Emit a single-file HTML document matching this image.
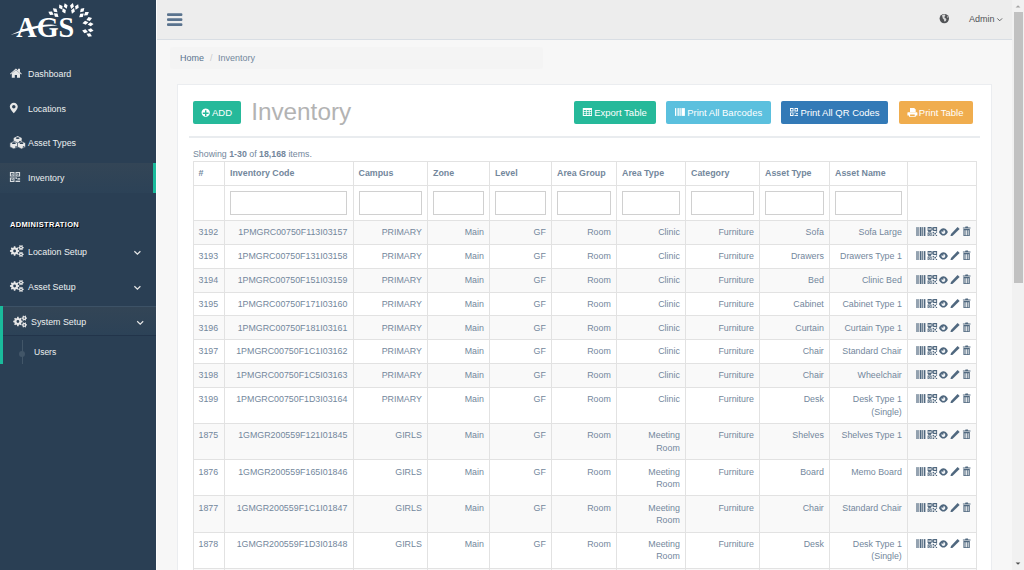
<!DOCTYPE html>
<html><head><meta charset="utf-8">
<style>
*{box-sizing:border-box;}
html,body{margin:0;padding:0;width:1024px;height:570px;overflow:hidden;background:#F7F7F7;font-family:"Liberation Sans",sans-serif;color:#73879C;font-size:9px;}
.abs{position:absolute;}
#side{position:absolute;left:0;top:0;width:156px;height:570px;background:#2A3F54;}
#vline{position:absolute;left:156px;top:0;width:1px;height:570px;background:#fdfdfd;}
#top{position:absolute;left:157px;top:0;width:855px;height:40px;background:#EDEDED;border-bottom:1px solid #D9DEE4;}
#sb{position:absolute;left:1012px;top:0;width:12px;height:570px;background:#F1F1F1;}
#thumb{position:absolute;left:1014px;top:12px;width:9px;height:271px;background:#C1C1C1;}
.menu{position:absolute;left:28px;color:#ECF0F1;font-size:8.85px;white-space:nowrap;margin-top:0.6px;}
.ico{position:absolute;}
#crumb{position:absolute;left:170px;top:47px;width:373px;height:22px;background:#F4F4F4;border-radius:3px;}
#panel{position:absolute;left:177px;top:84px;width:815px;height:500px;background:#fff;border:1px solid #EBEDF0;}
.btn{position:absolute;top:101px;height:23px;border-radius:2px;color:#fff;font-size:9.5px;line-height:23px;white-space:nowrap;}
#hr{position:absolute;left:189px;top:135.5px;width:791px;height:2px;background:#E9ECEF;}
table{position:absolute;left:192.5px;top:161px;border-collapse:collapse;table-layout:fixed;width:783px;}
td,th{border:1px solid #E2E2E2;padding:0 5.2px 0 5px;line-height:12px;font-size:8.85px;color:#73879C;text-align:right;vertical-align:top;}
th{text-align:left;font-weight:bold;height:24px;vertical-align:middle;padding-bottom:1.5px;}
tr.f td{height:35px;padding:5px 5.2px 5px 5px;}
tr.f input{display:block;width:100%;height:24px;border:1px solid #D0D0D0;margin:0;padding:0;background:#fff;}
tbody tr.d td{padding-top:5.25px;padding-bottom:5.25px;line-height:12.35px;}
tbody tr.d:nth-child(odd) td{background:#F9F9F9;}
td.a{padding:6px 0 0 8px;line-height:0;}
td.a svg{display:block;}
td.n{text-align:left;}
</style></head>
<body>
<svg width="0" height="0" style="position:absolute">
<defs>
<g id="barcode"><rect x="0" y="0" width="1.2" height="9"/><rect x="2" y="0" width="0.8" height="9"/><rect x="3.5" y="0" width="1.6" height="9"/><rect x="5.8" y="0" width="0.8" height="9"/><rect x="7.3" y="0" width="1.7" height="9"/></g>
<g id="qr"><path d="M0 0h4v4h-4zM1 1v2h2v-2zM5.5 0h4v4h-4zM6.5 1v2h2v-2zM0 5.5h4v4h-4zM1 6.5v2h2v-2z" fill-rule="evenodd"/><rect x="1.5" y="1.5" width="1" height="1"/><rect x="7" y="1.5" width="1" height="1"/><rect x="1.5" y="7" width="1" height="1"/><rect x="5" y="5" width="1.5" height="1.5"/><rect x="6.8" y="6" width="1.6" height="1.5"/><rect x="8.2" y="8" width="1.3" height="1.5"/><rect x="5" y="7.6" width="1.6" height="1.9"/><rect x="4.2" y="0.5" width="1" height="3"/><rect x="0.5" y="4.2" width="3" height="1"/><rect x="8.3" y="4.5" width="1.2" height="1.3"/></g>
<g id="eye"><path d="M0 3.7C1.4 1.1 2.9 0 4.5 0S7.6 1.1 9 3.7C7.6 6.3 6.1 7.4 4.5 7.4S1.4 6.3 0 3.7z"/><path d="M4.5 1.7C5.6 1.7 6.4 2.6 6.4 3.7S5.6 5.7 4.5 5.7S2.6 4.8 2.6 3.7c0-0.4 0.1-0.7 0.3-1C3 3.2 3.4 3.5 3.9 3.5C4.4 3.5 4.7 3.1 4.7 2.6C4.7 2.3 4.5 1.9 4.2 1.8z" fill="#EEF1F4"/></g>
<g id="pencil"><path d="M7.3 0.2L9.3 2.2L2.4 9.1L0 9.8L0.7 7.4z"/></g>
<g id="trash"><path d="M2.9 0h2.4l0.4 0.9h2.2v1.2h-7.6v-1.2h2.2z"/><path d="M0.8 2.6h6.4v6.4c0 0.5-0.3 0.8-0.8 0.8h-4.8c-0.5 0-0.8-0.3-0.8-0.8zM2 3.8v5h0.85v-5zM3.58 3.8v5h0.85v-5zM5.15 3.8v5h0.85v-5z" fill-rule="evenodd"/></g>
<g id="acts" fill="#50687F"><use href="#barcode" x="0.4" y="1.1"/><use href="#qr" x="11.6" y="0.9"/><use href="#eye" transform="translate(22.9,2.2)"/><use href="#pencil" x="34.3" y="0.7"/><use href="#trash" x="46.6" y="0.5"/></g>
</defs></svg>
<div id="side"></div>
<div id="vline"></div>
<div id="top"></div>
<div id="sb"></div>
<div id="thumb"></div>
<svg class="abs" style="left:1012px;top:0" width="12" height="570"><path d="M3.6 7.6L6 5.2L8.4 7.6z" fill="#A3A3A3"/><path d="M3.6 562.4L6 564.8L8.4 562.4z" fill="#505050"/></svg>


<!-- LOGO -->
<svg class="abs" style="left:0;top:0" width="156" height="45" viewBox="0 0 156 45">
<text x="16.3" y="37.2" font-family="Liberation Serif" font-size="28.5" font-weight="bold" fill="#fff" textLength="58" lengthAdjust="spacingAndGlyphs">AGS</text>
<path d="M10.5 35C20 30 30 26.8 40 25.2C47 24.2 53 24.3 57.5 25.8C52 25.8 46 26.3 40 27.6C30 29.8 20 32.6 10.5 35z" fill="#fff"/>
<defs><path id="lf" d="M0 -3L2 0L0 3L-2 0z"/></defs>
<g fill="#fff">
<use href="#lf" transform="translate(51,13.3) rotate(-60)"/>
<use href="#lf" transform="translate(55.2,10.2) rotate(-50)"/>
<use href="#lf" transform="translate(56.2,15.1) rotate(-50)"/>
<use href="#lf" transform="translate(60.8,7) rotate(-30)"/>
<use href="#lf" transform="translate(65.7,6) rotate(-20)"/>
<use href="#lf" transform="translate(64,10.9) rotate(-25)"/>
<use href="#lf" transform="translate(72,6) rotate(15)"/>
<use href="#lf" transform="translate(76.9,7) rotate(25)"/>
<use href="#lf" transform="translate(73,10.9) rotate(20)"/>
<use href="#lf" transform="translate(82.2,10.2) rotate(45)"/>
<use href="#lf" transform="translate(86.4,13.7) rotate(55)"/>
<use href="#lf" transform="translate(81.5,15.4) rotate(50)"/>
<use href="#lf" transform="translate(89.2,19) rotate(70)"/>
<use href="#lf" transform="translate(90.6,24.2) rotate(85)"/>
<use href="#lf" transform="translate(85.4,22.8) rotate(80)"/>
<use href="#lf" transform="translate(90.6,30.2) rotate(100)"/>
<use href="#lf" transform="translate(89.2,35) rotate(115)"/>
<use href="#lf" transform="translate(85,31.2) rotate(105)"/>
</g>
</svg>
<!-- sidebar menu -->
<div class="menu" style="top:68.9px;">Dashboard</div>
<div class="menu" style="top:103.4px;">Locations</div>
<div class="menu" style="top:137.9px;">Asset Types</div>
<div class="abs" style="left:0;top:163px;width:153px;height:30px;background:linear-gradient(#334556,#2C4257);"></div>
<div class="abs" style="left:153px;top:163px;width:3px;height:30px;background:#1ABB9C;"></div>
<div class="menu" style="top:172.9px;">Inventory</div>
<div class="menu" style="left:10px;top:219.8px;font-weight:bold;font-size:7.5px;letter-spacing:0.33px;color:#fff;text-shadow:1px 1px #000;">ADMINISTRATION</div>
<div class="menu" style="top:246.9px;">Location Setup</div>
<div class="menu" style="top:281.1px;">Asset Setup</div>
<div class="abs" style="left:0;top:306px;width:3px;height:58px;background:#1ABB9C;"></div>
<div class="abs" style="left:3px;top:306px;width:153px;height:30px;background:linear-gradient(#334556,#2C4257);border-top:1px solid #3d5266;border-bottom:1px solid #22344a;"></div>
<div class="menu" style="left:31px;top:316.3px;">System Setup</div>
<div class="menu" style="left:34px;top:346.4px;font-size:8.5px;">Users</div>
<!-- SIDEBAR ICONS -->
<svg class="abs" style="left:0;top:60px" width="30" height="310" viewBox="0 60 30 310">
<g fill="#E7E7E7">
<!-- home -->
<path d="M10 73.8L15.9 68.4L18 70.3V68.8H20V72.1L21.8 73.8L21.2 74.5L15.9 69.7L10.6 74.5z"/>
<path d="M11.8 73.6L15.9 70L20 73.6V77.8H17V75H14.8V77.8H11.8z"/>
<!-- marker -->
<path d="M13.8 102.7C16 102.7 17.8 104.5 17.8 106.7C17.8 108.8 15.6 111 13.8 113.3C12 111 9.8 108.8 9.8 106.7C9.8 104.5 11.6 102.7 13.8 102.7zM13.8 105C12.9 105 12.1 105.8 12.1 106.7C12.1 107.6 12.9 108.4 13.8 108.4C14.7 108.4 15.5 107.6 15.5 106.7C15.5 105.8 14.7 105 13.8 105z" fill-rule="evenodd"/>
<!-- cubes -->
<path d="M17.7 136.0L21.7 137.95000000000002V141.85L17.7 143.8L13.7 141.85V137.95000000000002z"/>
<path d="M13.9 141.1L17.9 143.05V146.95L13.9 148.9L9.9 146.95V143.05z" stroke="#2A3F54" stroke-width="0.6"/>
<path d="M21.5 141.1L25.5 143.05V146.95L21.5 148.9L17.5 146.95V143.05z" stroke="#2A3F54" stroke-width="0.6"/>
<g fill="#2A3F54"><ellipse cx="17.7" cy="138.1" rx="1.9" ry="0.85"/><path d="M19.0 141.5L20.5 140.8V142.0L19.0 142.70000000000002z"/><ellipse cx="13.9" cy="143.2" rx="1.9" ry="0.85"/><path d="M15.200000000000001 146.6L16.7 145.9V147.1L15.200000000000001 147.8z"/><ellipse cx="21.5" cy="143.2" rx="1.9" ry="0.85"/><path d="M22.8 146.6L24.3 145.9V147.1L22.8 147.8z"/></g>
</g>
<!-- qr inventory -->
<g fill="#D8DCE0">
<path d="M9.9 171.9h4.6v4.6h-4.6zM11 173v2.4h2.4v-2.4zM15.5 171.9h4.6v4.6h-4.6zM16.6 173v2.4h2.4v-2.4zM9.9 177.4h4.6v4.6h-4.6zM11 178.5v2.4h2.4v-2.4z" fill-rule="evenodd"/>
<rect x="11.6" y="173.6" width="1.2" height="1.2"/><rect x="17.2" y="173.6" width="1.2" height="1.2"/><rect x="11.6" y="179.1" width="1.2" height="1.2"/>
<rect x="15.5" y="177.4" width="1.5" height="1.5"/><rect x="17.5" y="178.2" width="2.6" height="1.4"/><rect x="15.5" y="180.6" width="4.6" height="1.4"/><rect x="14.5" y="176.5" width="1" height="1"/>
</g>
<g fill="#E7E7E7">
<!-- cogs -->
<g id="cogs"><path d="M18.09 250.10 L19.24 250.26 L19.24 251.74 L18.09 251.90 L17.70 252.83 L18.40 253.76 L17.36 254.80 L16.43 254.10 L15.50 254.49 L15.34 255.64 L13.86 255.64 L13.70 254.49 L12.77 254.10 L11.84 254.80 L10.80 253.76 L11.50 252.83 L11.11 251.90 L9.96 251.74 L9.96 250.26 L11.11 250.10 L11.50 249.17 L10.80 248.24 L11.84 247.20 L12.77 247.90 L13.70 247.51 L13.86 246.36 L15.34 246.36 L15.50 247.51 L16.43 247.90 L17.36 247.20 L18.40 248.24 L17.70 249.17zM16.00 251.00A1.4 1.4 0 1 0 13.20 251.00A1.4 1.4 0 1 0 16.00 251.00z" fill-rule="evenodd"/><path d="M22.89 246.94 L23.64 247.04 L23.64 248.16 L22.89 248.26 L22.51 248.91 L22.81 249.61 L21.83 250.17 L21.37 249.56 L20.63 249.56 L20.17 250.17 L19.19 249.61 L19.49 248.91 L19.11 248.26 L18.36 248.16 L18.36 247.04 L19.11 246.94 L19.49 246.29 L19.19 245.59 L20.17 245.03 L20.63 245.64 L21.37 245.64 L21.83 245.03 L22.81 245.59 L22.51 246.29zM21.75 247.60A0.75 0.75 0 1 0 20.25 247.60A0.75 0.75 0 1 0 21.75 247.60z" fill-rule="evenodd"/><path d="M22.89 253.74 L23.64 253.84 L23.64 254.96 L22.89 255.06 L22.51 255.71 L22.81 256.41 L21.83 256.97 L21.37 256.36 L20.63 256.36 L20.17 256.97 L19.19 256.41 L19.49 255.71 L19.11 255.06 L18.36 254.96 L18.36 253.84 L19.11 253.74 L19.49 253.09 L19.19 252.39 L20.17 251.83 L20.63 252.44 L21.37 252.44 L21.83 251.83 L22.81 252.39 L22.51 253.09zM21.75 254.40A0.75 0.75 0 1 0 20.25 254.40A0.75 0.75 0 1 0 21.75 254.40z" fill-rule="evenodd"/></g>
<use href="#cogs" transform="translate(0,35)"/>
<use href="#cogs" transform="translate(3.3,70.5)"/>
</g>
<g fill="none" stroke="#E7E7E7" stroke-width="1.3">
<path d="M134.3 251l3.1 3l3.1-3"/>
</g>
</svg>

<svg class="abs" style="left:130px;top:240px" width="20" height="90" viewBox="130 240 20 90"><g fill="none" stroke="#E7E7E7" stroke-width="1.2"><path d="M134.4 251.2l3 2.9l3-2.9"/><path d="M134.4 286.2l3 2.9l3-2.9"/><path d="M137.2 321.2l3 2.9l3-2.9"/></g></svg>
<div class="abs" style="left:21.5px;top:340px;width:1px;height:24px;background:#425668;"></div>
<div class="abs" style="left:19px;top:350.5px;width:6px;height:6px;border-radius:50%;background:#425668;"></div>

<!-- top nav -->
<svg class="abs" style="left:160px;top:5px" width="30" height="30" viewBox="160 5 30 30"><g fill="#5A738E"><rect x="167" y="13.3" width="15.4" height="2.6" rx="1"/><rect x="167" y="18.3" width="15.4" height="2.6" rx="1"/><rect x="167" y="23.3" width="15.4" height="2.6" rx="1"/></g></svg>
<svg class="abs" style="left:935px;top:10px" width="75" height="18" viewBox="935 10 75 18">
<circle cx="944.3" cy="18.6" r="4.7" fill="#515356"/>
<path d="M942 15.2c0.8-0.6 2-0.9 2.8-0.6l0.6 1.2l-0.9 0.9l0.2 1.2l1.3 0.5l0.4 1.3l-0.8 1.6c-0.6 0.3-1.2 0.2-1.4-0.4l-0.3-1.4l-1.1-0.9z M947.1 16l0.8 0.6l0.2 1.5l-0.8-0.5z" fill="#EDEDED" opacity="0.85"/>
<path d="M997.3 18.4l2.4 2.4l2.4-2.4" fill="none" stroke="#515356" stroke-width="0.9"/>
</svg>

<div class="abs" style="left:969px;top:14px;font-size:9px;color:#515356;">Admin</div>

<div id="crumb"></div>
<div class="abs" style="left:180px;top:53px;color:#5A738E;">Home</div>
<div class="abs" style="left:210px;top:53px;color:#ccc;">/</div>
<div class="abs" style="left:218px;top:53px;color:#73879C;">Inventory</div>

<div id="panel"></div>
<div class="btn" style="left:193px;width:48px;background:#26B99A;"></div>
<div class="btn" style="left:574px;width:82px;background:#26B99A;"></div>
<div class="btn" style="left:666px;width:105px;background:#5BC0DE;"></div>
<div class="btn" style="left:781px;width:107px;background:#337AB7;"></div>
<div class="btn" style="left:899px;width:74px;background:#F0AD4E;"></div>
<div class="btn" style="left:212px;">ADD</div>
<div class="btn" style="left:594.2px;">Export Table</div>
<div class="btn" style="left:687.2px;">Print All Barcodes</div>
<div class="btn" style="left:800.4px;">Print All QR Codes</div>
<div class="btn" style="left:918.8px;">Print Table</div>
<div class="abs" style="left:251.2px;top:97.6px;font-size:24.3px;color:#B3B3B3;">Inventory</div>
<svg class="abs" style="left:190px;top:100px" width="790" height="25" viewBox="190 100 790 25">
<g fill="#fff">
<path d="M205.7 108.4a4.15 4.15 0 1 0 0.01 0zM205 110.3h1.4v2.2h2.2v1.4h-2.2v2.2h-1.4v-2.2h-2.2v-1.4h2.2z" fill-rule="evenodd"/>
<path d="M582.8 108.1h9.2v7.8h-9.2zM583.8 109.9v1.4h2.1v-1.4zM586.7 109.9v1.4h2.1v-1.4zM589.6 109.9v1.4h1.6v-1.4zM583.8 112v1.4h2.1v-1.4zM586.7 112v1.4h2.1v-1.4zM589.6 112v1.4h1.6v-1.4zM583.8 114.1v1h2.1v-1zM586.7 114.1v1h2.1v-1zM589.6 114.1v1h1.6v-1z" fill-rule="evenodd"/>
<rect x="675" y="108.1" width="1.1" height="7.8"/><rect x="676.8" y="108.1" width="0.7" height="7.8"/><rect x="678.2" y="108.1" width="1.3" height="7.8"/><rect x="680.2" y="108.1" width="0.7" height="7.8"/><rect x="681.5" y="108.1" width="3.4" height="7.8"/>
<path d="M790 108h3.5v3.5h-3.5zM790.9 108.9v1.7h1.7v-1.7zM794.5 108h3.5v3.5h-3.5zM795.4 108.9v1.7h1.7v-1.7zM790 112.4h3.5v3.5h-3.5zM790.9 113.3v1.7h1.7v-1.7z" fill-rule="evenodd"/>
<rect x="794.5" y="112.4" width="1" height="1"/><rect x="796" y="113.2" width="2" height="1"/><rect x="794.5" y="115" width="3.5" height="0.9"/>
<path d="M910 108h4.2l1.5 1.5v2.5h-5.7z"/>
<path d="M908 112.2h8.8a0.6 0.6 0 0 1 0.6 0.6v2.6h-1.6v1.3h-6.8v-1.3h-1.6v-2.6a0.6 0.6 0 0 1 0.6-0.6zM910.1 114.6v1.4h4.6v-1.4z" fill-rule="evenodd"/>
</g>
</svg>
<div id="hr"></div>
<div class="abs" style="left:193px;top:149px;font-size:8.8px;">Showing <b>1-30</b> of <b>18,168</b> items.</div>

<!-- TABLE -->
<table><colgroup><col style="width:31.5px"><col style="width:128.5px"><col style="width:74.5px"><col style="width:62.0px"><col style="width:62.0px"><col style="width:65.0px"><col style="width:69.0px"><col style="width:74.0px"><col style="width:70.0px"><col style="width:78.0px"><col style="width:68.5px"></colgroup>
<thead><tr><th>#</th><th>Inventory Code</th><th>Campus</th><th>Zone</th><th>Level</th><th>Area Group</th><th>Area Type</th><th>Category</th><th>Asset Type</th><th>Asset Name</th><th></th></tr>
<tr class="f"><td></td><td><input></td><td><input></td><td><input></td><td><input></td><td><input></td><td><input></td><td><input></td><td><input></td><td><input></td><td></td></tr></thead><tbody>
<tr class="d"><td class="n">3192</td><td>1PMGRC00750F113I03157</td><td>PRIMARY</td><td>Main</td><td>GF</td><td>Room</td><td>Clinic</td><td>Furniture</td><td>Sofa</td><td>Sofa Large</td><td class="a"><span class="ic"><svg width="56" height="10"><use href="#acts"/></svg></span></td></tr>
<tr class="d"><td class="n">3193</td><td>1PMGRC00750F131I03158</td><td>PRIMARY</td><td>Main</td><td>GF</td><td>Room</td><td>Clinic</td><td>Furniture</td><td>Drawers</td><td>Drawers Type 1</td><td class="a"><span class="ic"><svg width="56" height="10"><use href="#acts"/></svg></span></td></tr>
<tr class="d"><td class="n">3194</td><td>1PMGRC00750F151I03159</td><td>PRIMARY</td><td>Main</td><td>GF</td><td>Room</td><td>Clinic</td><td>Furniture</td><td>Bed</td><td>Clinic Bed</td><td class="a"><span class="ic"><svg width="56" height="10"><use href="#acts"/></svg></span></td></tr>
<tr class="d"><td class="n">3195</td><td>1PMGRC00750F171I03160</td><td>PRIMARY</td><td>Main</td><td>GF</td><td>Room</td><td>Clinic</td><td>Furniture</td><td>Cabinet</td><td>Cabinet Type 1</td><td class="a"><span class="ic"><svg width="56" height="10"><use href="#acts"/></svg></span></td></tr>
<tr class="d"><td class="n">3196</td><td>1PMGRC00750F181I03161</td><td>PRIMARY</td><td>Main</td><td>GF</td><td>Room</td><td>Clinic</td><td>Furniture</td><td>Curtain</td><td>Curtain Type 1</td><td class="a"><span class="ic"><svg width="56" height="10"><use href="#acts"/></svg></span></td></tr>
<tr class="d"><td class="n">3197</td><td>1PMGRC00750F1C1I03162</td><td>PRIMARY</td><td>Main</td><td>GF</td><td>Room</td><td>Clinic</td><td>Furniture</td><td>Chair</td><td>Standard Chair</td><td class="a"><span class="ic"><svg width="56" height="10"><use href="#acts"/></svg></span></td></tr>
<tr class="d"><td class="n">3198</td><td>1PMGRC00750F1C5I03163</td><td>PRIMARY</td><td>Main</td><td>GF</td><td>Room</td><td>Clinic</td><td>Furniture</td><td>Chair</td><td>Wheelchair</td><td class="a"><span class="ic"><svg width="56" height="10"><use href="#acts"/></svg></span></td></tr>
<tr class="d"><td class="n">3199</td><td>1PMGRC00750F1D3I03164</td><td>PRIMARY</td><td>Main</td><td>GF</td><td>Room</td><td>Clinic</td><td>Furniture</td><td>Desk</td><td>Desk Type 1<br>(Single)</td><td class="a"><span class="ic"><svg width="56" height="10"><use href="#acts"/></svg></span></td></tr>
<tr class="d"><td class="n">1875</td><td>1GMGR200559F121I01845</td><td>GIRLS</td><td>Main</td><td>GF</td><td>Room</td><td>Meeting<br>Room</td><td>Furniture</td><td>Shelves</td><td>Shelves Type 1</td><td class="a"><span class="ic"><svg width="56" height="10"><use href="#acts"/></svg></span></td></tr>
<tr class="d"><td class="n">1876</td><td>1GMGR200559F165I01846</td><td>GIRLS</td><td>Main</td><td>GF</td><td>Room</td><td>Meeting<br>Room</td><td>Furniture</td><td>Board</td><td>Memo Board</td><td class="a"><span class="ic"><svg width="56" height="10"><use href="#acts"/></svg></span></td></tr>
<tr class="d"><td class="n">1877</td><td>1GMGR200559F1C1I01847</td><td>GIRLS</td><td>Main</td><td>GF</td><td>Room</td><td>Meeting<br>Room</td><td>Furniture</td><td>Chair</td><td>Standard Chair</td><td class="a"><span class="ic"><svg width="56" height="10"><use href="#acts"/></svg></span></td></tr>
<tr class="d"><td class="n">1878</td><td>1GMGR200559F1D3I01848</td><td>GIRLS</td><td>Main</td><td>GF</td><td>Room</td><td>Meeting<br>Room</td><td>Furniture</td><td>Desk</td><td>Desk Type 1<br>(Single)</td><td class="a"><span class="ic"><svg width="56" height="10"><use href="#acts"/></svg></span></td></tr>
<tr class="d"><td class="n">1879</td><td>1GMGR200559F1D5I01849</td><td>GIRLS</td><td>Main</td><td>GF</td><td>Room</td><td>Meeting<br>Room</td><td>Furniture</td><td>Chair</td><td>Standard Chair</td><td class="a"><span class="ic"><svg width="56" height="10"><use href="#acts"/></svg></span></td></tr>
</tbody></table>
<!-- /TABLE -->
</body></html>
